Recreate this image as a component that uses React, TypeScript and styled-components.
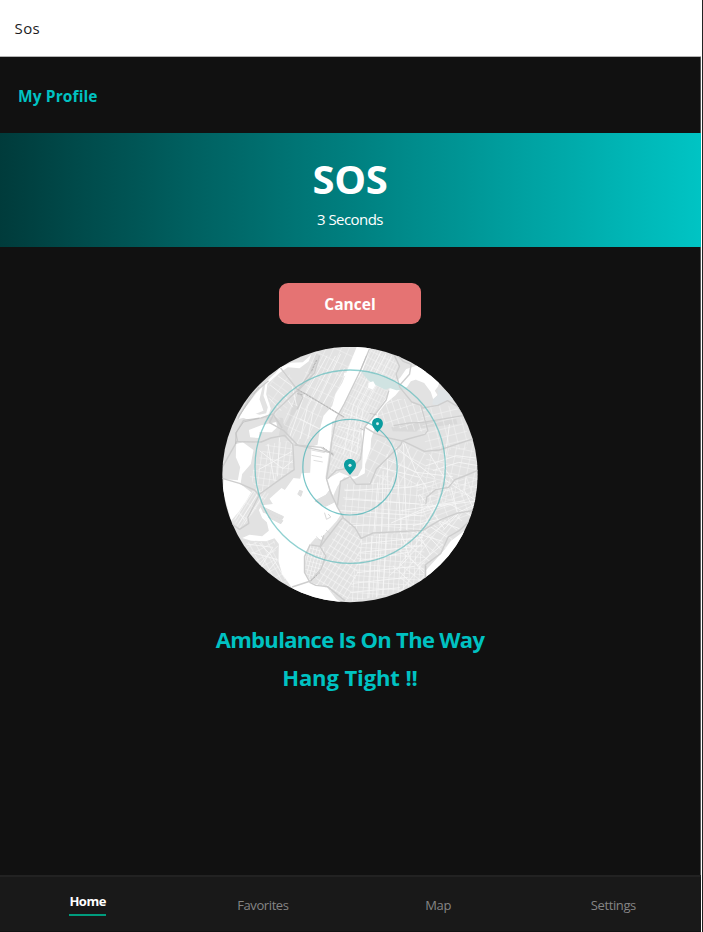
import React from "react";
import styled, { createGlobalStyle } from "styled-components";

const GlobalStyle = createGlobalStyle`
  * { box-sizing: border-box; }
  body { margin: 0; background: #111; }
`;

const Screen = styled.div`
  width: 703px;
  height: 932px;
  display: grid;
  grid-template-columns: 701px 1px 1px;
  font-family: "Segoe UI", "Open Sans", "Noto Sans", sans-serif;
  background: #111;
  overflow: hidden;
`;

const Edge = styled.div<{ $color: string }>`
  background: ${(p) => p.$color};
`;

const Page = styled.div`
  width: 701px;
  height: 932px;
  display: flex;
  flex-direction: column;
  background: #111;
`;

const Header = styled.header`
  width: 702px;
  height: 57px;
  padding: 0 14.5px;
  display: flex;
  align-items: center;
  background: #fff;
  border-bottom: 1px solid #b4b4b4;
`;

const Title = styled.h1`
  margin: 0;
  font-size: 15px;
  font-weight: 500;
  line-height: 20px;
  letter-spacing: 0.4px;
  color: #1c1c1e;
`;

const ProfileRow = styled.div`
  height: 76px;
  padding: 2px 18px 0;
  display: flex;
  align-items: center;
  border-right: 1px solid #555;
`;

const ProfileLink = styled.a`
  font-size: 15.5px;
  font-weight: 700;
  line-height: 20px;
  letter-spacing: 0.12px;
  color: #00c2c2;
  white-space: nowrap;
`;

const Banner = styled.section`
  height: 114px;
  padding: 21px 1px 0 0;
  display: flex;
  flex-direction: column;
  align-items: center;
  color: #fff;
  background: linear-gradient(90deg, #003b3b, #00c4c4);
`;

const BannerTitle = styled.div`
  font-size: 40px;
  font-weight: 700;
  line-height: 50px;
  letter-spacing: -0.3px;
`;

const BannerTimer = styled.div`
  font-size: 15px;
  line-height: 20px;
  margin-top: 5px;
  letter-spacing: -0.55px;
`;

const Content = styled.main`
  flex: 1;
  padding-top: 36px;
  display: flex;
  flex-direction: column;
  align-items: center;
  border-right: 1px solid #555;
`;

const CancelButton = styled.button`
  width: 142px;
  height: 41px;
  padding: 0;
  border: 0;
  border-radius: 9px;
  background: #e57373;
  color: #fff;
  font-family: inherit;
  font-size: 15.5px;
  font-weight: 700;
  line-height: 20px;
`;

const MapCanvas = styled.svg`
  display: block;
  width: 256px;
  height: 256px;
  margin-top: 23px;
`;

const Status = styled.p<{ $spacing: string }>`
  margin: 0;
  font-size: 22px;
  font-weight: 700;
  line-height: 38px;
  letter-spacing: ${(p) => p.$spacing};
  color: #00c2c2;
  white-space: nowrap;
`;

const StatusGroup = styled.div`
  margin-top: 17px;
  text-align: center;
`;

const TabBar = styled.nav`
  height: 57px;
  display: grid;
  grid-template-columns: repeat(4, 1fr);
  background: #191919;
  border-top: 2px solid #222;
  border-bottom: 1px solid #121212;
`;

const Tab = styled.div`
  display: flex;
  justify-content: center;
  align-items: flex-start;
  padding-top: 14px;
`;

const TabLabel = styled.span<{ $active?: boolean }>`
  font-size: 13px;
  line-height: 18px;
  margin-top: ${(p) => (p.$active ? "0" : "5px")};
  padding-top: ${(p) => (p.$active ? "1px" : "0")};
  padding-bottom: ${(p) => (p.$active ? "4px" : "0")};
  font-weight: ${(p) => (p.$active ? 700 : 400)};
  letter-spacing: ${(p) => (p.$active ? "-0.5px" : "-0.4px")};
  color: ${(p) => (p.$active ? "#fff" : "#858585")};
  border-bottom: ${(p) => (p.$active ? "2px solid #009c7d" : "0")};
`;

type District = { area: string; angle: number; w: number; h: number; o: number };

const districts: District[] = [
  { area: "M455 10L535 50L535 105L462 210L425 265L425 340L330 400L335 230L425 70Z", angle: 27, w: 9, h: 21, o: 0.65 },
  { area: "M290 10H415L372 110L338 175L300 230L275 300L225 300L190 235Z", angle: 25, w: 21, h: 34, o: 0.6 },
  { area: "M145 115L205 80L235 140L180 230L145 205Z", angle: 35, w: 32, h: 40, o: 0.5 },
  { area: "M140 300L220 290L225 375L120 450L90 400Z", angle: 8, w: 17, h: 20, o: 0.7 },
  { area: "M35 520L110 430L150 450L90 520L60 555Z", angle: 32, w: 9, h: 40, o: 0.7 },
  { area: "M70 595L165 590L175 660L215 725L140 695Z", angle: -28, w: 17, h: 24, o: 0.7 },
  { area: "M270 605L315 610L310 665L272 712L255 680Z", angle: 15, w: 10, h: 13, o: 0.9 },
  { area: "M370 520L425 585L425 660L385 770L285 720L318 625Z", angle: 32, w: 14, h: 21, o: 0.85 },
  { area: "M425 580L610 560L620 700L540 745L385 775Z", angle: 4, w: 15, h: 17, o: 0.75 },
  { area: "M375 420L450 420L475 390L620 420L610 560L425 580L365 515Z", angle: 5, w: 19, h: 25, o: 0.7 },
  { area: "M455 285L545 295L620 330L620 430L450 420L430 370Z", angle: 28, w: 24, h: 31, o: 0.7 },
  { area: "M510 165L570 165L620 195L620 265L520 250L470 225Z", angle: -18, w: 19, h: 27, o: 0.75 },
  { area: "M600 185L710 185L750 280L740 315L620 320Z", angle: -14, w: 27, h: 24, o: 0.65 },
  { area: "M620 325L760 290L780 440L620 500Z", angle: 12, w: 23, h: 26, o: 0.65 },
  { area: "M590 420L775 400L765 510L610 560Z", angle: -20, w: 31, h: 15, o: 0.65 },
  { area: "M610 555L745 500L690 600L620 665V705L540 745V600Z", angle: 38, w: 26, h: 31, o: 0.85 },
];

const waters = [
  // Hudson and the upper bay
  "M412 8H455L430 78L402 125L372 182L350 228L338 232L334 290L326 345L318 400L330 438L352 488L365 510L352 530L325 560L315 570L308 588L288 582L270 602L258 640L255 682L276 716L325 733L350 765L390 790H250L218 732L188 690L177 652L178 600L165 583L140 592L95 590L68 582L90 572L128 577L148 560L142 535L128 522L118 498L128 484L160 480L150 464L186 432L196 438L222 402L242 404L246 388L272 386L276 308L294 302L302 252L312 215L338 186L348 150L368 117Z",
  // inner harbour and East River
  "M322 405L360 385L392 398L415 396L428 372L430 320L426 262L440 247L465 212L503 157L510 135L543 100L560 75L590 66L620 82L606 101L574 112L563 128L540 139L528 154L497 180L476 208L470 240L455 284L453 315L437 360L436 388L405 405L374 400L354 427L340 458L352 488Z",
  // Flushing bay
  "M590 64L660 115L655 128L646 140L654 153L641 166L634 144L614 117L591 108L580 88Z",
  // Newark bay and its creeks
  "M275 32L250 55L215 56L182 70L168 88L138 115L132 155L145 190L140 208L120 212L75 200L60 216L80 225L120 225L145 216L154 194L140 151L144 119L180 87L205 70L240 73L268 52Z",
  "M58 225L67 205L110 148L130 125L120 166L132 200L92 216Z",
  "M50 300L70 295L102 318L94 360L68 390L63 420L95 445L80 470L60 500L35 530L10 440L13 405L55 409L62 370L49 340Z",
  "M88 258L125 244L170 234L174 249L157 265L120 264L118 282L92 280Z",
  "M735 560L786 520V740H610L618 680L650 645L676 616L695 590Z",
  "M374 86L391 86L372 98Z",
];

const highways = [
  "M452 10L425 75L374 180L350 224L336 295L331 345L321 404L332 442L354 490L372 522L407 552L425 583L461 567L610 559L665 526L715 507L760 500",
  "M508 140L500 168L470 207L435 250L428 310L423 345L400 370L350 379L324 405",
  "M354 485L363 412L392 398L410 421L452 420L471 374L510 336L544 302L548 291L500 280L467 268L437 250",
  "M526 8L525 35L540 67L530 91L541 130L577 174L604 184L625 260L616 271L565 285L548 290L615 322L660 318L710 301L775 280",
  "M530 30L551 52L575 61L570 91L542 122",
  "M604 184L610 192L655 184L684 170L715 188L735 215",
  "M619 480L622 459L648 437L687 430L706 407L735 396L786 374",
  "M768 514L719 560L686 579L664 628L617 663V710",
  "M180 68L236 140L260 150L374 220",
  "M290 48L275 82L238 135L165 205L150 236L193 260L235 304L342 328",
  "M300 35L285 87L234 142L250 160L233 196",
  "M50 293L125 294L154 282L195 274L220 301L224 377L190 400L121 450L85 520L88 538L60 556L37 540",
  "M8 403L60 418L105 438L120 456",
  "M10 367L54 289L49 268L72 229L125 222L160 210L188 252",
  "M55 224L95 154L147 110",
  "M370 520L320 585L302 609L319 636L305 675L273 711L218 729",
  "M272 602L255 638L255 685L272 716L289 724L324 728L376 770",
  "M275 603L302 607L313 574",
  "M522 245L570 237L610 235L730 215",
  "M225 303L305 310L343 334",
];

const streets = [
  "M486 20L402 180L372 330M499 30L415 190L392 340M517 35L430 198L411 330M370 205L437 230M356 247L420 263M350 275L419 299M343 302L410 328",
  "M363 30L280 205L265 285M348 36L264 188L242 285M375 72L304 190M323 35L250 165L210 280M240 224L330 270",
  "M552 287L588 380L620 430M530 310L585 355L645 400M500 345L590 385L700 398M480 370L600 400M630 330L680 410L770 470M690 240L673 370L710 422M620 365L710 335L770 342M640 380L718 355L775 365",
  "M463 568L475 415M486 563L491 380M508 562L503 330M544 558L530 310M561 558L552 300M375 465L600 480M362 500L615 516M390 545L610 540M375 440L570 430L650 410",
  "M515 537L625 489L780 470M540 525L690 480L765 520M545 500L735 470M580 545L690 518L770 480M600 450L675 555M610 550L680 435M695 430L715 510L670 560M740 400L735 440L765 500",
  "M540 555L569 638L616 690M563 560L670 592M590 558L634 634M610 558L665 617M632 548L687 582M655 530L720 554M568 638L632 573L711 511M593 665L670 600M520 665L590 730M510 695L565 643",
  "M480 570L471 760M458 575L448 762M500 568L490 752M425 600L610 580M423 625L610 605M420 650L570 624M412 686L585 667M400 718L565 700M394 745L542 731",
  "M80 600L160 610L115 686M96 625L174 647L139 690M120 597L154 633L197 705M105 675L148 631L175 606",
  "M46 527L100 442M60 536L114 450M73 541L128 458M48 489L75 529",
  "M152 123L199 160L220 190M149 163L185 200M176 96L218 126L231 185M120 320L190 374L220 350M145 300L164 410M180 281L174 397M117 377L218 322",
];

const industrial = [
  "M234 140L250 146L235 192L213 228L202 275L190 252L207 224Z",
  "M135 217L190 222L203 282L178 274L183 250L155 240Z",
  "M515 250L600 236L710 225L714 240L600 253L590 263L520 262Z",
  "M290 28L302 35L288 68L276 96L266 90Z",
];

function Pin({ x, y, scale }: { x: number; y: number; scale: number }) {
  return (
    <g transform={`translate(${x} ${y}) scale(${scale})`}>
      <path d="M0 48C-5 40-18 31-18 18C-18 7-10 0 0 0S18 7 18 18C18 31 5 40 0 48Z" fill="#0a9c9f" />
      <circle cx="0" cy="19" r="4.8" fill="#d9f0ef" />
    </g>
  );
}

function CityMap() {
  return (
    <MapCanvas viewBox="7.5 9 768 768" role="img" aria-label="Ambulance location">
      <defs>
        <clipPath id="disc"><circle cx="391.5" cy="391.5" r="383" /></clipPath>
        {districts.map((d, i) => (
          <pattern key={i} id={`grid${i}`} width={d.w} height={d.h} patternUnits="userSpaceOnUse" patternTransform={`rotate(${d.angle})`}>
            <path d={`M0 0H${d.w}M0 0V${d.h}`} stroke="#fff" strokeWidth="3" opacity={d.o} />
          </pattern>
        ))}
      </defs>
      <g clipPath="url(#disc)" fill="none" strokeLinejoin="round">
        <rect width="786" height="786" fill="#e2e2e2" />
        {industrial.map((d) => <path key={d} d={d} fill="#d9d9d9" />)}
        {districts.map((d, i) => <path key={i} d={d.area} fill={`url(#grid${i})`} />)}
        {streets.map((d) => <path key={d} d={d} stroke="#f7f7f7" strokeWidth="2.6" />)}
        {waters.map((d) => <path key={d} d={d} fill="#fff" />)}
        <path d="M654 137L676 137L704 166L681 169L655 185L638 181L642 164L656 154Z" fill="#dfe4e7" />
        <path d="M425 84Q500 88 566 136L531 139L510 132L497 137L461 119L446 108Z" fill="#d0e3e2" />
        <path d="M447 116L461 112L468 124L460 137L446 131Z" fill="#fff" />
        <path d="M120 484L192 518L188 526L130 504M142 501L190 530L184 539L147 520M239 439L249 442L244 457L234 450M276 318L316 326M276 334L308 340M282 349L310 354M286 471L320 453L331 438L343 475L318 487Z" fill="#e0e0e0" stroke="#dedede" strokeWidth="3" />
        <path d="M315 506L321 526L334 519L326 510M305 576L318 588M290 578L310 597M320 559L334 570" stroke="#d7d7d7" strokeWidth="3" />
        {highways.map((d) => <path key={d} d={d} stroke="#cecece" strokeWidth="4.2" />)}
        <path d="M234 136L374 219M292 48L276 82M233 149L250 153M310 310L343 333M274 710L302 685" stroke="#b5b5b5" strokeWidth="3" strokeDasharray="7 3" />
        <path d="M423 78L441 35M58 217L118 129M48 300L50 265L72 234L118 223M450 208L473 213M421 253L435 259M619 665V700" stroke="#b9b9b9" strokeWidth="2" />
        <ellipse cx="392" cy="368" rx="285.5" ry="290" stroke="#55b8b9" strokeOpacity="0.65" strokeWidth="4" />
        <ellipse cx="391.5" cy="369.5" rx="141.5" ry="143.5" stroke="#4bb3b5" strokeOpacity="0.75" strokeWidth="3.7" />
        <Pin x={474} y={222} scale={0.9} />
        <Pin x={391.5} y={345} scale={1} />
      </g>
    </MapCanvas>
  );
}

const tabs = ["Home", "Favorites", "Map", "Settings"];

export default function App() {
  return (
    <>
      <GlobalStyle />
      <Screen>
        <Page>
          <Header><Title>Sos</Title></Header>
          <ProfileRow><ProfileLink>My Profile</ProfileLink></ProfileRow>
          <Banner>
            <BannerTitle>SOS</BannerTitle>
            <BannerTimer>3 Seconds</BannerTimer>
          </Banner>
          <Content>
            <CancelButton>Cancel</CancelButton>
            <CityMap />
            <StatusGroup>
              <Status $spacing="-0.68px">Ambulance Is On The Way</Status>
              <Status $spacing="-0.1px">Hang Tight !!</Status>
            </StatusGroup>
          </Content>
          <TabBar>
            {tabs.map((name, i) => (
              <Tab key={name}><TabLabel $active={i === 0}>{name}</TabLabel></Tab>
            ))}
          </TabBar>
        </Page>
        <Edge $color="#fff" />
        <Edge $color="#222" />
      </Screen>
    </>
  );
}
